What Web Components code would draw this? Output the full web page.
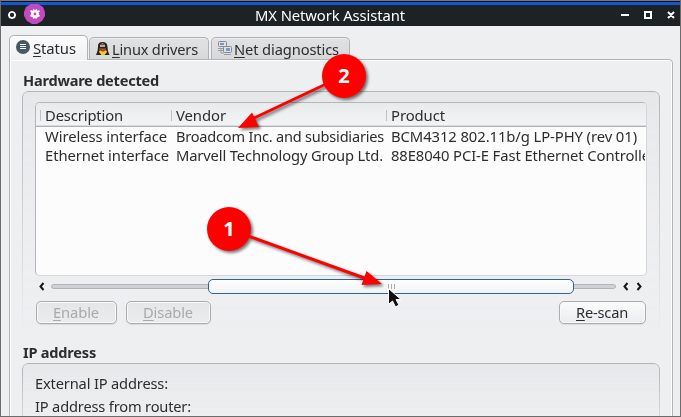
<!DOCTYPE html>
<html lang="en"><head><meta charset="utf-8"><title>MX Network Assistant</title>
<style>html,body{margin:0;height:100%;overflow:hidden}body{font:15px/20px "Noto Sans","Open Sans",sans-serif;color:#2b2d2f}</style></head>
<body><network-window></network-window>
<script>
const define=(name,html,ready)=>customElements.define(name,class extends HTMLElement{
  connectedCallback(){
    if(!this.shadowRoot){const t=document.createElement('template');t.innerHTML=html;this.attachShadow({mode:'open'}).appendChild(t.content.cloneNode(true));}
    if(ready)ready(this,this.shadowRoot);
  }});

// A label whose run of text fills exactly w pixels.
define('fit-label',`<style>:host{display:block;white-space:nowrap;height:20px;line-height:20px}span{display:inline-block;height:20px;margin-top:-1px;vertical-align:top;transform-origin:0 50%}
u{text-decoration:none;position:relative;display:inline-block;height:20px;vertical-align:top}u::after{content:"";position:absolute;left:0;right:0;top:18px;height:1px;background:currentColor}</style><span></span>`,(h,r)=>{
  const s=r.querySelector('span'),t=h.getAttribute('text')||'',k=h.getAttribute('key'),w=+h.getAttribute('w');
  if(!t)return;
  s.textContent='';
  if(k){const u=document.createElement('u');u.textContent=t[0];s.append(u,t.slice(1));}else s.textContent=t;
  h.style.width=w+'px';
  const n=s.getBoundingClientRect().width;
  s.style.letterSpacing=((w-n)*.5/t.length)+'px';
  s.style.transform='scaleX('+w/s.getBoundingClientRect().width+')';
});

define('title-bar',`<style>:host{display:flex;height:26px;box-sizing:border-box;border-top:1px solid #777;background:linear-gradient(#111 1px,#1359d6 1px,#1359d6 4px,#1d2224 4px);color:#fff;padding:0 4px 0 7px;align-items:flex-start}
svg{display:block;flex:none}fit-label{margin:5px 214px 0 209px}</style>
<svg width="39" height="25" viewBox="7 1 39 25"><circle cx="12" cy="15" r="3" fill="none" stroke="#fff" stroke-width="1.7"/><path d="M12 11v1M12 18v1M8 15h1M15 15h1" stroke="#fff" stroke-width="1.3"/>
<path d="M31 4h7l5 3 2 5v4l-3 5-5 3h-5l-5-3-3-5v-4l2-5z" fill="#bf4bbd"/><g fill="#fff"><circle cx="35" cy="14" r="4"/><path d="M33.3 9h1v2h1.4V9h1v10h-1v-2h-1.4v2h-1zM30 11.5l1-1.5 9 5.500-1 1.500zM39 10l1 1.500-9 5.500-1-1.500z"/></g><circle cx="35" cy="14" r="1.4" fill="#bf4bbd"/></svg>
<fit-label text="MX Network Assistant" w="150"></fit-label>
<svg width="57" height="25" viewBox="619 1 57 25" fill="none" stroke="#fff" stroke-width="2"><path d="M621 15h8M645 12h6v6h-6zM668 12l6 6M674 12l-6 6"/></svg>`);

define('tab-item',`<style>:host{display:flex;box-sizing:border-box;height:22px;border:1px solid #b0b2b5;border-bottom:0;border-radius:5px 5px 0 0;background:linear-gradient(#e1e2e4,#d7d8da);padding:1px 0 0 6px;box-shadow:inset 0 1px #ececee}
:host([active]){height:25px;background:linear-gradient(#fcfcfc,#eff0f1);padding:2px 0 0 5px;box-shadow:inset 1px 1px #fff;position:relative;z-index:1}
::slotted(svg){flex:none;display:block}</style><slot></slot>`);

define('tab-strip',`<style>:host{display:flex;align-items:flex-end;height:24px;margin:9px 0 0 8px;position:relative;z-index:1}
.a{width:79px;margin-bottom:-1px}.b{width:120px;margin-left:1px}.c{width:139px;margin-left:2px}fit-label{margin-top:1px;flex:none}</style>
<tab-item active class="a"><svg width="18" height="18" viewBox="0 0 18 18"><circle cx="8" cy="9" r="7" fill="#455a64"/><path d="M5 6.500h6M5 8.500h6M5 10.500h6" stroke="#fff"/></svg><fit-label text="Status" key="S" w="43"></fit-label></tab-item>
<tab-item class="b"><svg width="16" height="18" viewBox="1 0 16 18"><path d="M3 8Q2.500 3 7.500 3t5 5l.5 4 1.500 4H1l1.500-4z" fill="#29261f"/><path d="M5 6l2.500-2L10 6v2H5z" fill="#b7a9a3"/><path d="M6 5.500h3" stroke="#c32c28"/><path d="M4 9.500h7l-.5 2H5z" fill="#77705f"/><path d="M5 11h6l1 2-2.500 3H6.500L4 13z" fill="#f2ce27"/><path d="M5 10.500l3 1.500 3-1.500" stroke="#c53223" stroke-width="1.500" fill="none"/></svg><fit-label text="Linux drivers" key="L" w="86"></fit-label></tab-item>
<tab-item class="c"><svg width="16" height="18" viewBox="1 0 16 18" fill="#dfe2e4" stroke="#85898d"><rect x="1.500" y="2.500" width="8" height="5" rx="1"/><path d="M1 9.500h5M1 11.500h5M4 9v5h3M7 15.500h7" stroke="#9a9da0"/><rect x="6.500" y="7.500" width="8" height="6" rx="1"/><path d="M3 4h4v2H3zM9 9h4v3H9z" fill="#6f9bca" stroke="none"/></svg><fit-label text="Net diagnostics" key="N" w="105"></fit-label></tab-item>`);

define('push-button',`<style>:host{display:flex;justify-content:center;box-sizing:border-box;height:23px;border:1px solid #aaacae;border-radius:5px;background:linear-gradient(#fbfbfb,#ebecee);box-shadow:0 1px #dcdddf,inset 0 0 0 1px #f9f9f9;padding-right:1px}
:host([disabled]){color:#a8aaac;background:linear-gradient(#e5e6e8,#ececee)}fit-label{margin-top:1px}</style><fit-label></fit-label>`,(h,r)=>{
  const f=r.querySelector('fit-label'),c=document.createElement('fit-label');for(const a of ['text','key','w'])c.setAttribute(a,h.getAttribute(a));f.replaceWith(c);
});

define('device-list',`<style>:host{display:block;box-sizing:border-box;width:612px;height:174px;border:1px solid #b4b6b9;border-right-color:#d5d6d8;border-bottom-color:#d5d6d8;border-radius:5px;background:#fcfcfc;overflow:hidden}
.row{display:grid;grid-template-columns:131px 215px 264px;height:19px;padding-left:9px;overflow:hidden;margin-right:1px}.head{height:24px;border-bottom:1px solid #aeb1b4;background:linear-gradient(#e9eaec,#f3f4f5);box-shadow:inset 0 -1px #dadcdf;padding:3px 0 0 9px;box-sizing:border-box;margin-right:0}
.head fit-label{position:relative}.head fit-label::before{content:"";position:absolute;left:-5px;top:4px;width:1px;height:11px;background:#bfc1c3}</style>
<div class="row head"><fit-label text="Description" w="78"></fit-label><fit-label text="Vendor" w="50"></fit-label><fit-label text="Product" w="54"></fit-label></div>
<div class="row"><fit-label text="Wireless interface" w="122"></fit-label><fit-label text="Broadcom Inc. and subsidiaries" w="208"></fit-label><fit-label text="BCM4312 802.11b/g LP-PHY (rev 01)" w="246"></fit-label></div>
<div class="row"><fit-label text="Ethernet interface" w="124"></fit-label><fit-label text="Marvell Technology Group Ltd." w="207"></fit-label><fit-label text="88E8040 PCI-E Fast Ethernet Controller" w="265"></fit-label></div>`);

define('h-scrollbar',`<style>:host{display:flex;align-items:center;width:612px;height:15px;margin-top:3px}svg{display:block;flex:none}
.groove{box-sizing:border-box;width:565px;height:5px;border:1px solid #b2b4b7;border-radius:3px;background:#cfd1d4;display:flex;align-items:center;padding-left:156px}
.thumb{box-sizing:border-box;flex:none;width:366px;height:15px;border:1px solid #316491;border-radius:5px;background:linear-gradient(#fff,#f1f2f2);display:flex;justify-content:center;align-items:center;gap:2px}i{width:1px;height:5px;background:#a8aaac}</style>
<svg width="16" height="15" fill="none" stroke="#15181a" stroke-width="2"><path d="M8.500 4L5.500 7.500l3 3.500"/></svg><div class="groove"><div class="thumb"><i></i><i></i><i></i></div></div>
<svg width="31" height="15" fill="none" stroke="#15181a" stroke-width="2"><path d="M11.500 4l-3 3.500 3 3.500M21.500 4l3 3.500-3 3.500"/></svg>`);

define('group-box',`<style>:host{display:block}fit-label{font-weight:700;margin-left:1px}
.box{position:relative;box-sizing:border-box;width:638px;border:1px solid transparent;border-radius:6px;padding:10px 12px;height:var(--h)}
.box::before{content:"";position:absolute;inset:-1px;border-radius:6px;background:linear-gradient(#e6e7e9,#eff0f2 90%);border:1px solid #b2b4b7;mask:linear-gradient(#000,transparent)}
.inner{position:relative}</style><fit-label></fit-label><div class="box"><div class="inner"><slot></slot></div></div>`,(h,r)=>{
  const f=r.querySelector('fit-label'),c=document.createElement('fit-label');c.setAttribute('text',h.getAttribute('text'));c.setAttribute('w',h.getAttribute('w'));f.replaceWith(c);
});

define('status-pane',`<style>:host{display:block;box-sizing:border-box;width:664px;height:370px;margin-left:8px;border:1px solid #b2b4b7;border-radius:0 4px 0 0;box-shadow:inset 1px 1px #fff,inset -1px 0 #fff;padding:11px 0 0 12px}
.hw{--h:244px}.ip{--h:90px;margin-top:8px}.buttons{display:flex;gap:9px;margin:7px 0 0 1px;width:610px}.buttons :last-child{margin-left:auto}
.e{width:81px}.d{width:85px}.r{width:87px}.gap{margin-top:3px}</style>
<group-box class="hw" text="Hardware detected" w="136"><device-list></device-list><h-scrollbar></h-scrollbar><div class="buttons"><push-button disabled class="e" text="Enable" key="E" w="46"></push-button><push-button disabled class="d" text="Disable" key="D" w="50"></push-button><push-button class="r" text="Re-scan" key="R" w="52"></push-button></div></group-box>
<group-box class="ip" text="IP address" w="73"><fit-label text="External IP address:" w="133"></fit-label><fit-label class="gap" text="IP address from router:" w="156"></fit-label></group-box>`);

// Numbered pointers and the mouse cursor, floating over the window.
define('callout-layer',`<style>:host{position:absolute;inset:0;pointer-events:none;z-index:5}svg{display:block}text{font:bold 20px "Noto Sans",sans-serif;text-anchor:middle;fill:#fff}</style>
<svg width="681" height="417"><g fill="#f00" style="filter:drop-shadow(2px 2px 1.500px #0008)"><path d="M343 76L252 119" stroke="#f00" stroke-width="3"/><path d="M238 128L252 112.500l7 14.500z"/><circle cx="344" cy="76" r="22"/>
<path d="M229 229L367 279" stroke="#f00" stroke-width="3"/><path d="M382 284L366.500 271l-5 14z"/><circle cx="229" cy="229" r="22"/></g><text x="344" y="83">2</text><text x="229" y="236">1</text>
<path d="M388.500 288.500v16l4-3.500 3 6 3.500-2-3-5.500h5z" fill="#111" stroke="#fff"/></svg>`);

define('network-window',`<style>:host{display:block;position:relative;box-sizing:border-box;width:681px;height:417px;overflow:hidden;background:#eeeff1}
.frame{position:absolute;inset:0;box-sizing:border-box;border:1px solid #6c6c6c;border-top:0;z-index:4;pointer-events:none}.body{padding-left:1px}</style>
<title-bar></title-bar><div class="body"><tab-strip></tab-strip><status-pane></status-pane></div><div class="frame"></div><callout-layer></callout-layer>`);
</script></body></html>
